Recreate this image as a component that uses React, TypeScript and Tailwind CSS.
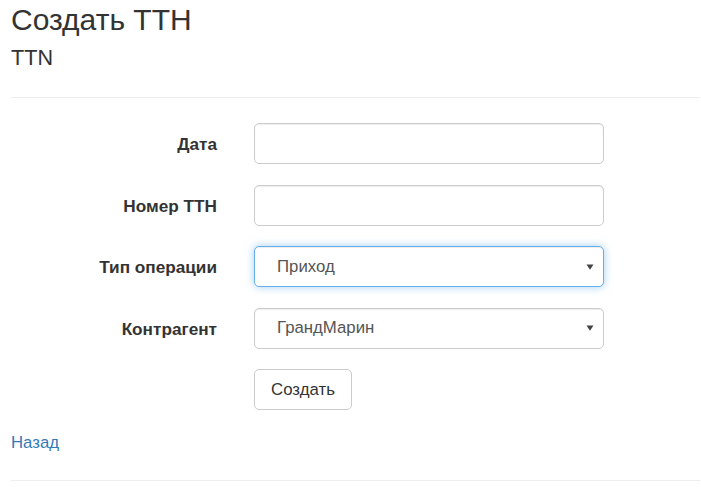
import React from "react";

const font = { fontFamily: '"Liberation Sans", Arial, sans-serif' };

function Arrow() {
  return (
    <svg
      aria-hidden
      width="8"
      height="6"
      viewBox="0 0 8 6"
      className="absolute right-[10px] top-1/2 -translate-y-1/2 pointer-events-none"
    >
      <path d="M0.5 0.5 L7.5 0.5 L4 5.8 Z" fill="#444" />
    </svg>
  );
}

function Row({ label, children }: { label: string; children: React.ReactNode }) {
  return (
    <div className="flex items-center h-[41px]">
      <label className="w-[206px] shrink-0 pt-[3px] text-right font-bold text-[17.2px] text-[#333]">
        {label}
      </label>
      <div className="ml-[37px] w-[350px]">{children}</div>
    </div>
  );
}

export default function App() {
  return (
    <div className="min-h-[502px] bg-white pl-[11px] pr-[1px] text-[#333]" style={font}>
      <h3 className="pt-[3px] text-[30px] leading-[34px] font-normal">Создать ТТН</h3>
      <h4 className="mt-[9px] text-[21.6px] leading-[24px] font-normal">TTN</h4>
      <hr className="mt-[27px] border-0 border-t border-[#eee]" />

      <form className="mt-[25px] flex flex-col gap-[20.5px]">
        <Row label="Дата">
          <input
            type="text"
            className="block w-full h-[41px] rounded-[5px] border border-[#ccc] bg-white px-[14px] text-[16.8px] text-[#555] shadow-[inset_0_1px_1px_rgba(0,0,0,0.075)] outline-none"
          />
        </Row>
        <Row label="Номер ТТН">
          <input
            type="text"
            className="block w-full h-[41px] rounded-[5px] border border-[#ccc] bg-white px-[14px] text-[16.8px] text-[#555] shadow-[inset_0_1px_1px_rgba(0,0,0,0.075)] outline-none"
          />
        </Row>
        <Row label="Тип операции">
          <div className="relative">
            <select
              defaultValue="in"
              className="block w-full h-[41px] appearance-none rounded-[5px] border border-[#66afe9] bg-white pl-[22px] text-[16.8px] text-[#555] shadow-[inset_0_1px_1px_rgba(0,0,0,0.075),0_0_8px_rgba(102,175,233,0.6)] outline-none"
            >
              <option value="in">Приход</option>
              <option value="out">Расход</option>
            </select>
            <Arrow />
          </div>
        </Row>
        <Row label="Контрагент">
          <div className="relative">
            <select
              defaultValue="gm"
              className="block w-full h-[41px] appearance-none rounded-[5px] border border-[#ccc] bg-white pl-[22px] text-[16.8px] text-[#555] shadow-[inset_0_1px_1px_rgba(0,0,0,0.075)] outline-none"
            >
              <option value="gm">ГрандМарин</option>
            </select>
            <Arrow />
          </div>
        </Row>
        <div className="flex h-[41px]">
          <div className="w-[206px] shrink-0" />
          <button
            type="button"
            className="ml-[37px] h-[41px] w-[98px] rounded-[5px] border border-[#ccc] bg-white text-[16.8px] text-[#333]"
          >
            Создать
          </button>
        </div>
      </form>

      <div className="mt-[20.5px] text-[16.8px] leading-[24px]">
        <a href="#" className="text-[#337ab7]">
          Назад
        </a>
      </div>
      <hr className="mt-[25.5px] border-0 border-t border-[#eee]" />
    </div>
  );
}
